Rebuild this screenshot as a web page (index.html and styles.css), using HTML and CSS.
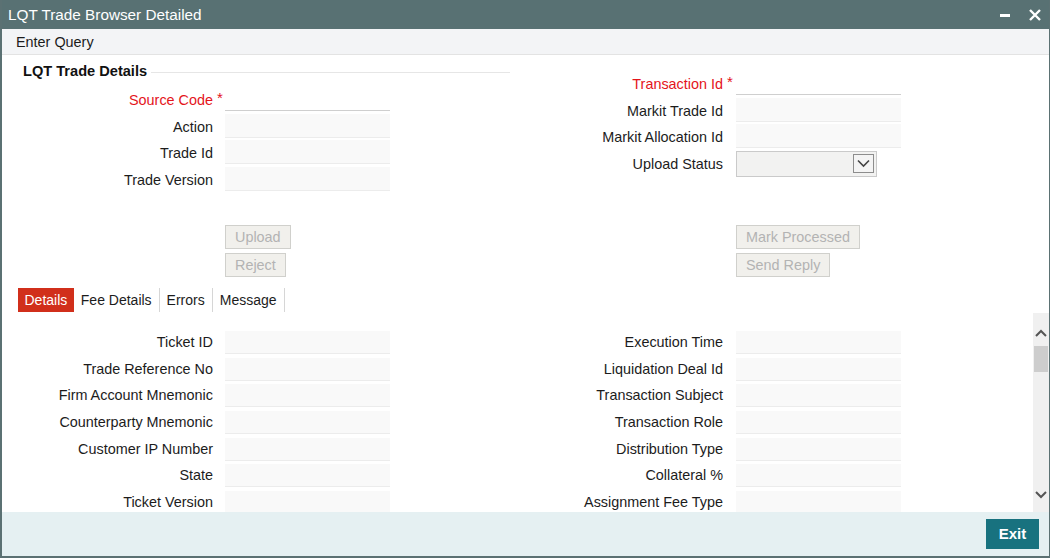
FILE: index.html
```html
<!DOCTYPE html>
<html>
<head>
<meta charset="utf-8">
<title>LQT Trade Browser Detailed</title>
<link rel="stylesheet" href="styles.css">
</head>
<body>
<div class="window">
  <div class="titlebar">
    <span class="title">LQT Trade Browser Detailed</span>
    <div class="controls">
      <svg class="ctl" width="14" height="14" viewBox="0 0 14 14"><rect x="2" y="6" width="10" height="3" fill="#fff"/></svg>
      <svg class="ctl" width="14" height="14" viewBox="0 0 14 14"><path d="M2 2 L12 12 M12 2 L2 12" stroke="#fff" stroke-width="2.4" fill="none"/></svg>
    </div>
  </div>
  <div class="menubar"><span class="menu-item">Enter Query</span></div>

  <div class="header">
    <div class="hcol hcol-left">
      <div class="section-title"><span>LQT Trade Details</span><i class="rule"></i></div>
      <div class="form form-left">
        <label class="lbl req">Source Code</label><span class="star">*</span><span class="inp inp-req"></span>
        <label class="lbl">Action</label><span class="star"></span><span class="inp"></span>
        <label class="lbl">Trade Id</label><span class="star"></span><span class="inp"></span>
        <label class="lbl">Trade Version</label><span class="star"></span><span class="inp"></span>
      </div>
    </div>
    <div class="hcol hcol-right">
      <div class="form form-right">
        <label class="lbl req">Transaction Id</label><span class="star">*</span><span class="inp inp-req"></span>
        <label class="lbl">Markit Trade Id</label><span class="star"></span><span class="inp"></span>
        <label class="lbl">Markit Allocation Id</label><span class="star"></span><span class="inp"></span>
        <label class="lbl">Upload Status</label><span class="star"></span>
        <span class="select">
          <span class="select-btn"><svg width="13" height="9" viewBox="0 0 13 9"><path d="M1 1.5 L6.5 7 L12 1.5" stroke="#444" stroke-width="1.6" fill="none"/></svg></span>
        </span>
      </div>
    </div>
    <div class="btns btns-left">
      <span class="btn">Upload</span>
      <span class="btn">Reject</span>
    </div>
    <div class="btns btns-right">
      <span class="btn">Mark Processed</span>
      <span class="btn">Send Reply</span>
    </div>
  </div>

  <div class="tabs">
    <span class="tab active">Details</span>
    <span class="tab sep">Fee Details</span>
    <span class="tab sep">Errors</span>
    <span class="tab sep">Message</span>
  </div>

  <div class="body">
    <div class="body-content">
      <div class="form form-left lower">
        <label class="lbl">Ticket ID</label><span class="star"></span><span class="inp"></span>
        <label class="lbl">Trade Reference No</label><span class="star"></span><span class="inp"></span>
        <label class="lbl">Firm Account Mnemonic</label><span class="star"></span><span class="inp"></span>
        <label class="lbl">Counterparty Mnemonic</label><span class="star"></span><span class="inp"></span>
        <label class="lbl">Customer IP Number</label><span class="star"></span><span class="inp"></span>
        <label class="lbl">State</label><span class="star"></span><span class="inp"></span>
        <label class="lbl">Ticket Version</label><span class="star"></span><span class="inp"></span>
      </div>
      <div class="form form-right lower">
        <label class="lbl">Execution Time</label><span class="star"></span><span class="inp"></span>
        <label class="lbl">Liquidation Deal Id</label><span class="star"></span><span class="inp"></span>
        <label class="lbl">Transaction Subject</label><span class="star"></span><span class="inp"></span>
        <label class="lbl">Transaction Role</label><span class="star"></span><span class="inp"></span>
        <label class="lbl">Distribution Type</label><span class="star"></span><span class="inp"></span>
        <label class="lbl">Collateral %</label><span class="star"></span><span class="inp"></span>
        <label class="lbl">Assignment Fee Type</label><span class="star"></span><span class="inp"></span>
      </div>
    </div>
    <div class="scrollbar">
      <svg class="sb-arrow" width="16" height="14" viewBox="0 0 16 14"><path d="M3 10 L8 5 L13 10" stroke="#555" stroke-width="2" fill="none"/></svg>
      <span class="sb-thumb"></span>
      <span class="sb-fill"></span>
      <svg class="sb-arrow" width="16" height="14" viewBox="0 0 16 14"><path d="M3 4 L8 9 L13 4" stroke="#555" stroke-width="2" fill="none"/></svg>
    </div>
  </div>

  <div class="footer">
    <span class="exit">Exit</span>
  </div>
</div>
</body>
</html>
```
FILE: styles.css
```css
* { box-sizing: border-box; }
html, body { margin: 0; padding: 0; background: #fff; }
body { font-family: "Liberation Sans", Arial, sans-serif; font-size: 14.4px; color: #1c1c1c; }

.window {
  width: 1050px;
  height: 558px;
  border-left: 2px solid #5b7173;
  border-right: 1px solid #5b7173;
  border-bottom: 2px solid #5b7173;
  display: flex;
  flex-direction: column;
  overflow: hidden;
}

.titlebar {
  height: 29px;
  margin-left: -2px;
  margin-right: -1px;
  background: #587173;
  display: flex;
  align-items: center;
  justify-content: space-between;
  padding: 0 8px 0 8px;
  color: #fff;
  flex: none;
}
.title { font-size: 15.3px; color: #fff; }
.controls { display: flex; gap: 16px; align-items: center; }
.ctl { display: block; }

.menubar {
  height: 26px;
  background: #f3f4f6;
  border-bottom: 1px solid #e3e3e3;
  display: flex;
  align-items: center;
  padding-left: 14px;
  flex: none;
}
.menu-item { color: #1c1c1c; }

.header {
  height: 233px;
  flex: none;
  display: grid;
  grid-template-columns: 518px 1fr;
  grid-template-rows: 170px auto;
}
.hcol-left { padding-top: 7px; }
.hcol-right { padding-top: 16px; }

.section-title {
  display: flex;
  align-items: center;
  height: 18px;
  padding-left: 21px;
  width: 508px;
  margin-bottom: 7px;
}
.section-title span { font-weight: bold; font-size: 14.6px; color: #111; white-space: nowrap; }
.section-title .rule { flex: 1; border-top: 1px solid #e6e6e6; margin-left: 4px; margin-top: 2px; }

.form {
  display: grid;
  grid-auto-rows: 26.5px;
  align-items: start;
}
.form-left { grid-template-columns: 211px 12px 165px; }
.form-right { grid-template-columns: 203px 13px 165px; }

.lbl {
  text-align: right;
  white-space: nowrap;
  height: 24px;
  line-height: 26px;
  color: #1c1c1c;
}
.lbl.req { color: #e4141b; }
.star {
  color: #e4141b;
  padding-left: 4px;
  line-height: 22px;
  font-size: 15px;
}
.inp {
  display: block;
  height: 24px;
  background: #f9f9f9;
  border-bottom: 1px solid #ececec;
}
.inp.inp-req { background: #fff; border-bottom: 1px solid #cfcfcf; }

.select {
  width: 141px;
  height: 26px;
  background: #f2f2f1;
  border: 1px solid #cacaca;
  display: flex;
  align-items: center;
  justify-content: flex-end;
  padding-right: 2px;
}
.select-btn {
  width: 21px;
  height: 19px;
  border: 1px solid #8d8d8d;
  background: #f4f4f4;
  display: flex;
  align-items: center;
  justify-content: center;
}

.btns {
  display: flex;
  flex-direction: column;
  align-items: flex-start;
  gap: 4px;
}
.btns-left { padding-left: 223px; }
.btns-right { padding-left: 216px; }
.btn {
  height: 24px;
  line-height: 22px;
  border: 1px solid #d0d0cc;
  background: #f1f0ec;
  color: #b3b3b3;
  padding: 0 9px;
  white-space: nowrap;
}

.tabs {
  height: 25px;
  flex: none;
  display: flex;
  padding-left: 16px;
  align-items: stretch;
}
.tab {
  height: 24px;
  line-height: 24px;
  padding: 0 7px;
  font-size: 14px;
  color: #1c1c1c;
}
.tab.active { background: #d12f1b; color: #fff; padding: 0 6.5px; }
.tab.sep { border-right: 1px solid #d6d6d6; }

.body {
  flex: 1;
  display: flex;
  min-height: 0;
}
.body-content {
  flex: 1;
  overflow: hidden;
  display: grid;
  grid-template-columns: 518px 1fr;
  align-content: start;
  padding-top: 18px;
}
.form.lower { grid-auto-rows: 26.67px; }
.form.lower .inp { height: 23px; }
.form.lower .lbl { height: 23px; line-height: 23px; }

.scrollbar {
  width: 16px;
  flex: none;
  background: #f0f0f0;
  display: flex;
  flex-direction: column;
  align-items: center;
  padding-top: 13px;
  padding-bottom: 10px;
}
.sb-arrow { display: block; flex: none; }
.sb-thumb {
  display: block;
  width: 14px;
  height: 26px;
  background: #cdcdcd;
  margin-top: 6px;
  flex: none;
}
.sb-fill { flex: 1; }

.footer {
  height: 44px;
  flex: none;
  background: #e5f0f2;
  display: flex;
  align-items: center;
  justify-content: flex-end;
  padding-right: 10px;
}
.exit {
  width: 53px;
  height: 30px;
  line-height: 30px;
  text-align: center;
  background: #18727f;
  color: #fff;
  font-weight: bold;
  font-size: 15px;
}
```
